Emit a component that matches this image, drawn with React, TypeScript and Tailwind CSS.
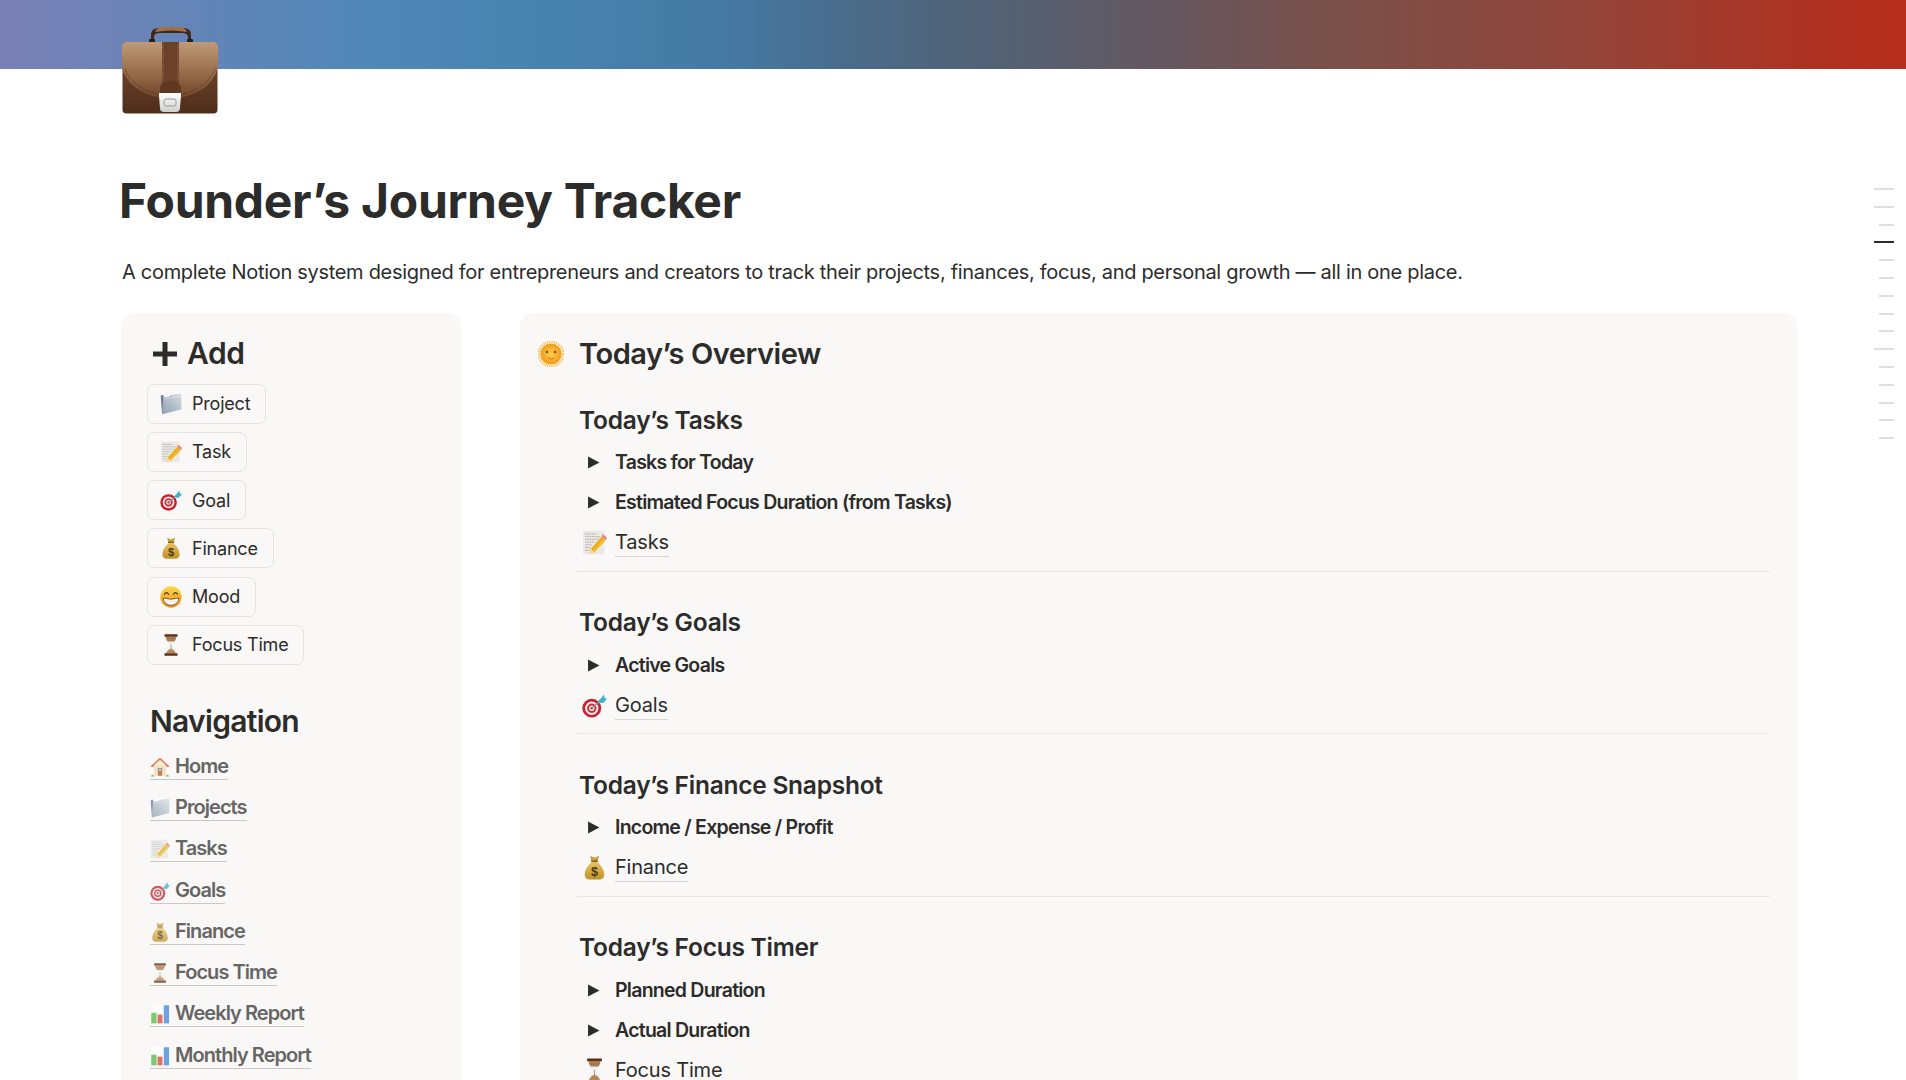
import React from "react";

type EmojiName = "folder" | "memo" | "target" | "money" | "grin" | "hourglass" | "house" | "chart" | "sun";

function Emoji({ name, className }: { name: EmojiName; className?: string }) {
  return (
    <svg viewBox="0 0 64 64" className={className}>
      <defs>
        <linearGradient id="folder-g" x1="1" y1="0" x2="0" y2="1">
          <stop offset="0" stopColor="#d6dde4" />
          <stop offset="1" stopColor="#8e9fb1" />
        </linearGradient>
        <linearGradient id="money-g" x1="0" y1="0" x2="0" y2="1">
          <stop offset="0" stopColor="#e6c165" />
          <stop offset="1" stopColor="#c09228" />
        </linearGradient>
        <linearGradient id="grin-g" x1="0" y1="0" x2="0" y2="1">
          <stop offset="0" stopColor="#fcd84a" />
          <stop offset="1" stopColor="#f28c1c" />
        </linearGradient>
        <radialGradient id="sun-g">
          <stop offset="0" stopColor="#fcd04e" />
          <stop offset="1" stopColor="#f49a18" />
        </radialGradient>
      </defs>
      {name === "folder" && (
        <g>
          <path d="M2 8 L6 62 L14 56 L10 5 Z" fill="#6b7e93" />
          <path d="M10 12 L26 10 L30 6 L62 2 L62 48 L6 62 Z" fill="url(#folder-g)" />
          <path d="M12 17 L62 9" stroke="#eef2f5" strokeWidth="1.2" />
        </g>
      )}
      {name === "memo" && (
        <g>
          <rect x="3" y="2" width="54" height="60" fill="#ebe9e4" />
          <path d="M8 10h28M8 17h38M8 24h34M8 31h24M8 38h18M8 45h14M8 52h12" stroke="#8d8d8d" strokeWidth="1.6" strokeDasharray="4 1.5" />
          <path d="M22 48 L50 16 L61 26 L32 57 L19 60 Z" fill="#f2bb2e" />
          <path d="M50 16 L54 11 L64 20 L61 26 Z" fill="#e8808a" />
          <path d="M22 48 L32 57 L19 60 Z" fill="#f1d9ae" />
          <path d="M26 51 L54 20" stroke="#c98a14" strokeWidth="2" />
        </g>
      )}
      {name === "target" && (
        <g>
          <circle cx="25" cy="39" r="24" fill="#c9202c" />
          <circle cx="25" cy="39" r="17" fill="#f4f0ee" />
          <circle cx="25" cy="39" r="12" fill="#cf2a35" />
          <circle cx="25" cy="39" r="7" fill="#f4f0ee" />
          <circle cx="25" cy="39" r="3.5" fill="#cf2a35" />
          <path d="M25 39 L50 18" stroke="#7f93a0" strokeWidth="3" />
          <path d="M42 20 L50 12 L56 4 L58 13 L64 15 L56 24 L48 26 Z" fill="#3fb3c6" />
        </g>
      )}
      {name === "money" && (
        <g>
          <path d="M21 2 L32 7 L44 2 L40 16 L24 16 Z" fill="#c99c37" />
          <rect x="23" y="14" width="18" height="4" rx="2" fill="#80601b" />
          <path d="M25 18 H39 C50 27 57 40 57 50 C57 60 50 63 44 63 H20 C14 63 7 60 7 50 C7 40 14 27 25 18 Z" fill="url(#money-g)" />
          <text x="32" y="55" textAnchor="middle" fontSize="32" fontWeight="700" fontFamily="'Liberation Sans', sans-serif" fill="#4a3a12">$</text>
        </g>
      )}
      {name === "grin" && (
        <g>
          <circle cx="32" cy="32" r="31" fill="url(#grin-g)" />
          <path d="M13 24 Q19 15 25 24 M39 24 Q45 15 51 24" fill="none" stroke="#4a3215" strokeWidth="3.5" strokeLinecap="round" />
          <path d="M9 35 Q32 42 55 35 Q52 56 32 56 Q12 56 9 35 Z" fill="#fff" stroke="#4a3215" strokeWidth="2" />
          <path d="M10 44 H54" stroke="#c9c4bc" strokeWidth="1.5" />
        </g>
      )}
      {name === "hourglass" && (
        <g>
          <path d="M15 7 H49 C49 24 38 28 36 32 C38 36 49 40 49 57 H15 C15 40 26 36 28 32 C26 28 15 24 15 7 Z" fill="#eef1f2" />
          <path d="M17 8 H47 C47 15 44 19 41 22 H23 C20 19 17 15 17 8 Z" fill="#a97c50" />
          <path d="M18 56 C20 48 28 44 32 42 C36 44 44 48 46 56 Z" fill="#b98656" />
          <rect x="31" y="30" width="2" height="14" fill="#b98656" />
          <rect x="13" y="1" width="38" height="7" rx="1" fill="#5e2f16" />
          <rect x="13" y="56" width="38" height="7" rx="1" fill="#5e2f16" />
        </g>
      )}
      {name === "house" && (
        <g>
          <rect x="12" y="26" width="40" height="34" fill="#f1dcb6" />
          <path d="M1 30 L32 2 L63 30 L56 33 L32 12 L8 33 Z" fill="#d2562f" />
          <path d="M12 26 L32 9 L52 26 Z" fill="#f6e7c8" />
          <rect x="25" y="35" width="14" height="25" fill="#a75a30" />
          <rect x="28" y="38" width="8" height="7" fill="#8fc3df" />
          <path d="M3 62 Q8 50 13 62 Z M51 62 Q56 50 61 62 Z" fill="#55a63c" />
        </g>
      )}
      {name === "chart" && (
        <g>
          <rect x="2" y="2" width="60" height="60" fill="#ffffff" />
          <rect x="4" y="28" width="17" height="34" fill="#55b848" />
          <rect x="24" y="34" width="16" height="28" fill="#d9453a" />
          <rect x="44" y="4" width="17" height="58" fill="#3f86dc" />
        </g>
      )}
      {name === "sun" && (
        <g>
          <circle cx="32" cy="32" r="30" fill="none" stroke="#f7b52c" strokeWidth="6" strokeDasharray="2 2.5" />
          <circle cx="32" cy="32" r="26" fill="url(#sun-g)" />
          <circle cx="22" cy="27" r="3" fill="#7a4e16" />
          <circle cx="42" cy="27" r="3" fill="#7a4e16" />
          <path d="M26 42 Q32 47 38 42" fill="none" stroke="#c67f18" strokeWidth="2.5" strokeLinecap="round" />
        </g>
      )}
    </svg>
  );
}

function Briefcase() {
  return (
    <svg viewBox="0 0 96 87" className="h-[87px] w-[96px]">
      <defs>
        <linearGradient id="bag-flap" x1="0" y1="0" x2="0" y2="1">
          <stop offset="0" stopColor="#c09a78" />
          <stop offset="0.55" stopColor="#976c4b" />
          <stop offset="1" stopColor="#6f4529" />
        </linearGradient>
        <linearGradient id="bag-body" x1="0" y1="0" x2="0" y2="1">
          <stop offset="0" stopColor="#7a4f31" />
          <stop offset="1" stopColor="#4e2d1a" />
        </linearGradient>
        <linearGradient id="bag-clasp" x1="0" y1="0" x2="0" y2="1">
          <stop offset="0" stopColor="#ffffff" />
          <stop offset="1" stopColor="#cfcfcd" />
        </linearGradient>
      </defs>
      {/* handle */}
      <path d="M29 15 V8 Q29 1 37 1 H61 Q69 1 69 8 V15 H66 V10 Q66 6 60 6 H38 Q32 6 32 10 V15 Z" fill="#3f2818" />
      <path d="M33 5 Q35 0 41 0 H57 Q63 0 65 5 Q57 3.5 49 3.5 Q41 3.5 33 5 Z" fill="#a86f45" />
      <rect x="27" y="12" width="6" height="4" rx="1" fill="#2f1d10" />
      <rect x="65" y="12" width="6" height="4" rx="1" fill="#2f1d10" />
      {/* body and flap */}
      <rect x="0.5" y="15" width="95" height="71.5" rx="4" fill="url(#bag-body)" />
      <path d="M0 20 Q0 15 5 15 H91 Q96 15 96 20 V40 Q90 64 58 71 H38 Q6 64 0 40 Z" fill="url(#bag-flap)" />
      <path d="M3 42 Q10 61 37 67.5 M93 42 Q86 61 59 67.5" fill="none" stroke="#4f3019" strokeWidth="0.8" strokeDasharray="1.5 1" />
      <rect x="40" y="15" width="17" height="48" fill="#6b4228" />
      <path d="M38 72 V62 Q38 54 48 54 Q59 54 59 62 V72 Z" fill="#5e3820" />
      <path d="M41 17 V54 M56 17 V54" stroke="#a57c5a" strokeWidth="0.8" strokeDasharray="1.5 1" />
      {/* clasp */}
      <path d="M37 66 H59 V69 L58 81 Q58 85 54 85 H42 Q38 85 38 81 L37 69 Z" fill="url(#bag-clasp)" />
      <rect x="42" y="72" width="12" height="7" rx="2" fill="none" stroke="#9a9a98" strokeWidth="1" />
    </svg>
  );
}

function AddButton({ name, label }: { name: EmojiName; label: string }) {
  return (
    <div className="flex h-10 w-fit items-center rounded-[7px] border border-[#e6e4e1] pl-[12px] pr-[15px] text-[18px] tracking-[-0.2px] text-[#2c2c2b]">
      <Emoji name={name} className="h-[22px] w-[22px]" />
      <span className="ml-[10px]">{label}</span>
    </div>
  );
}

function NavLink({ name, label }: { name: EmojiName; label: string }) {
  return (
    <div className="flex h-[41.3px] items-center">
      <div className="flex items-end border-b border-[#c9c8c6] text-[20px] font-semibold leading-[25px] tracking-[-0.95px] text-[#666665]">
        <Emoji name={name} className="mb-[2px] h-[20px] w-[20px] opacity-75" />
        <span className="ml-[5px]">{label}</span>
      </div>
    </div>
  );
}

function Toggle({ label }: { label: string }) {
  return (
    <div className="flex h-[40px] items-center">
      <svg viewBox="0 0 12 12" className="ml-[10px] h-[13px] w-[13px]">
        <path d="M1 0.5 L11.5 6 L1 11.5 Z" fill="#2c2c2b" />
      </svg>
      <span className="ml-[15px] text-[19.5px] font-semibold tracking-[-0.75px] text-[#2c2c2b]">{label}</span>
    </div>
  );
}

function PageLink({ name, label }: { name: EmojiName; label: string }) {
  return (
    <div className="flex h-[40px] items-center">
      <Emoji name={name} className="ml-[5px] h-[25px] w-[25px]" />
      <span className="ml-[8px] border-b border-[#d5d4d1] text-[20px] leading-[28px] tracking-[-0.2px] text-[#2c2c2b]">{label}</span>
    </div>
  );
}

const nav: { name: EmojiName; label: string }[] = [
  { name: "house", label: "Home" },
  { name: "folder", label: "Projects" },
  { name: "memo", label: "Tasks" },
  { name: "target", label: "Goals" },
  { name: "money", label: "Finance" },
  { name: "hourglass", label: "Focus Time" },
  { name: "chart", label: "Weekly Report" },
  { name: "chart", label: "Monthly Report" },
];

const buttons: { name: EmojiName; label: string }[] = [
  { name: "folder", label: "Project" },
  { name: "memo", label: "Task" },
  { name: "target", label: "Goal" },
  { name: "money", label: "Finance" },
  { name: "grin", label: "Mood" },
  { name: "hourglass", label: "Focus Time" },
];

const outline = [1, 1, 0, 2, 0, 0, 0, 0, 0, 1, 0, 0, 0, 0, 0];

export default function App() {
  return (
    <div className="relative h-screen overflow-hidden bg-white font-['Inter',sans-serif] text-[#2c2c2b]">
      {/* Cover */}
      <div className="h-[69px] bg-[linear-gradient(90deg,#7a80b5_0%,#5088b8_19%,#4782ae_29%,#457aa3_38%,#4a6a88_45%,#566070_54%,#6c5458_64%,#7a504a_70%,#93443a_83%,#b0301f_96%,#b52d1c_100%)]" />

      <div className="pl-[120px]">
        <div className="-mt-[42px] ml-[2px] h-[87px]">
          <Briefcase />
        </div>
        <h1 className="-ml-[1px] mt-[57.5px] text-[48px] font-bold leading-[58px] tracking-[-0.3px]">Founder’s Journey Tracker</h1>
        <p className="ml-[2px] mt-[27.5px] text-[20px] leading-[30px] tracking-[-0.3px]">
          A complete Notion system designed for entrepreneurs and creators to track their projects, finances, focus, and personal growth — all in one place.
        </p>
      </div>

      <div className="ml-[121px] mt-[25.5px] flex gap-[59px]">
        {/* Left column */}
        <div className="h-[800px] w-[340px] rounded-[14px] bg-[#f9f8f7] pl-[26px]">
          <div className="flex h-[71px] items-center pl-[6px] pt-[11px]">
            <svg viewBox="0 0 24 24" className="h-[24px] w-[24px]">
              <path d="M9.5 0h5v9.5H24v5h-9.5V24h-5v-9.5H0v-5h9.5z" fill="#2c2c2b" />
            </svg>
            <span className="ml-[10px] text-[30px] font-semibold tracking-[-0.4px]">Add</span>
          </div>
          <div className="flex flex-col gap-[8.3px]">
            {buttons.map((b) => (
              <AddButton key={b.label} name={b.name} label={b.label} />
            ))}
          </div>
          <div className="ml-[3px] mt-[37px] flex h-[40px] items-center text-[30px] font-semibold tracking-[-0.7px] text-[#2c2c2b]">Navigation</div>
          <div className="ml-[3px] mt-[4px]">
            {nav.map((n) => (
              <NavLink key={n.label} name={n.name} label={n.label} />
            ))}
          </div>
        </div>

        {/* Right column */}
        <div className="h-[800px] w-[1277px] rounded-[14px] bg-[#f9f8f7]">
          <div className="flex h-[80px] items-center pl-[18px] pt-[3px]">
            <Emoji name="sun" className="h-[26px] w-[26px]" />
            <span className="ml-[15px] text-[29px] font-semibold tracking-[-0.45px]">Today’s Overview</span>
          </div>
          <div className="pl-[57px] pr-[27px]">
            <section className="border-b border-[#e9e8e5] pb-[8px]">
              <h3 className="ml-[2px] mt-[5.2px] flex h-[45px] items-center text-[24.5px] font-semibold tracking-[-0.25px]">Today’s Tasks</h3>
              <Toggle label="Tasks for Today" />
              <Toggle label="Estimated Focus Duration (from Tasks)" />
              <PageLink name="memo" label="Tasks" />
            </section>
            <section className="border-b border-[#e9e8e5] pb-[8px]">
              <h3 className="ml-[2px] mt-[28.5px] flex h-[45px] items-center text-[24.5px] font-semibold tracking-[-0.25px]">Today’s Goals</h3>
              <Toggle label="Active Goals" />
              <PageLink name="target" label="Goals" />
            </section>
            <section className="border-b border-[#e9e8e5] pb-[8px]">
              <h3 className="ml-[2px] mt-[28.5px] flex h-[45px] items-center text-[24.5px] font-semibold tracking-[-0.25px]">Today’s Finance Snapshot</h3>
              <Toggle label="Income / Expense / Profit" />
              <PageLink name="money" label="Finance" />
            </section>
            <section>
              <h3 className="ml-[2px] mt-[28.5px] flex h-[45px] items-center text-[24.5px] font-semibold tracking-[-0.25px]">Today’s Focus Timer</h3>
              <Toggle label="Planned Duration" />
              <Toggle label="Actual Duration" />
              <PageLink name="hourglass" label="Focus Time" />
            </section>
          </div>
        </div>
      </div>

      {/* Page outline */}
      <div className="absolute right-[12px] top-[188px] flex w-[20px] flex-col items-end gap-[15.8px]">
        {outline.map((kind, i) => (
          <div
            key={i}
            className={
              kind === 2
                ? "h-[2px] w-[20px] bg-[#2c2c2b]"
                : kind === 1
                ? "h-[2px] w-[20px] bg-[#e0deda]"
                : "h-[2px] w-[15px] bg-[#e0deda]"
            }
          />
        ))}
      </div>
    </div>
  );
}
